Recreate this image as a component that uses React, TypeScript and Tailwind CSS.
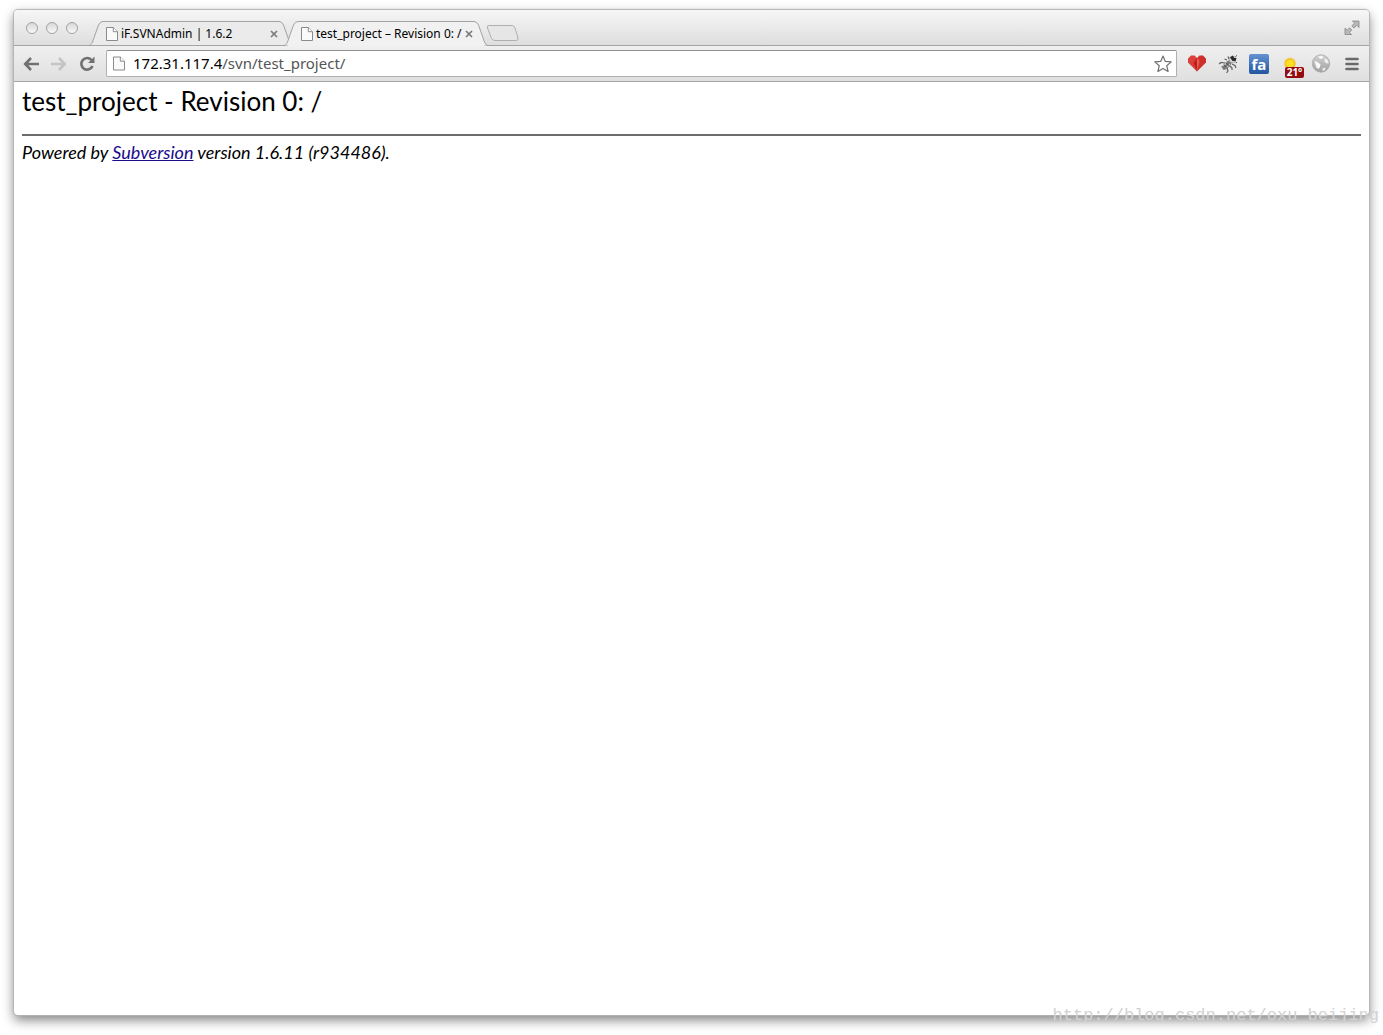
import type { ReactNode } from 'react';

const PageIcon = ({ className }: { className: string }) => (
  <svg viewBox="0 0 12 14" className={className} aria-hidden="true">
    <path d="M.5.5h6.8l4.2 4.2v8.8H.5z" fill="#fafafa" stroke="#8a8a8a" />
    <path d="M7.3.5v4.2h4.2" fill="#fff" stroke="#8a8a8a" />
  </svg>
);

const CloseButton = () => (
  <button type="button" aria-label="Close tab" className="shrink-0">
    <svg viewBox="0 0 8 8" className="size-2" aria-hidden="true">
      <path d="M1 1l6 6M7 1L1 7" stroke="#7a7a7a" strokeWidth="1.7" />
    </svg>
  </button>
);

type TabProps = { title: string; active?: boolean };

const Tab = ({ title, active = false }: TabProps) => (
  <div className={active ? 'relative z-10 -ml-[9px] h-6 w-[204px]' : 'relative h-6 w-[204px]'}>
    <svg viewBox="0 0 204 25" className="absolute top-0 left-0 h-[25px] w-[204px]" aria-hidden="true">
      <path
        d="M0 24.5C2 24 2.500 23 3.500 21L9.500 4Q11 .5 14 .5H190Q193 .5 194.500 4L200.500 21Q201.500 24 204 24.500"
        fill={active ? '#f1f1f1' : '#ebebeb'}
        stroke="#a3a3a3"
      />
      {active ? (
        <path d="M4 24.500H200" stroke="#f1f1f1" />
      ) : (
        <path d="M0 24.500H204" stroke="#a3a3a3" />
      )}
    </svg>
    <div className="relative flex h-6 items-center gap-[3px] pt-px pr-[15px] pl-[17px]">
      <PageIcon className="h-[14px] w-3 shrink-0" />
      <span className="grow text-xs whitespace-nowrap text-black">{title}</span>
      <CloseButton />
    </div>
  </div>
);

type ToolButtonProps = { label: string; children: ReactNode };

const ToolButton = ({ label, children }: ToolButtonProps) => (
  <button type="button" aria-label={label} className="flex size-5 shrink-0 items-center justify-center">
    {children}
  </button>
);

const TitleBar = () => (
  <div className="flex h-9 items-end rounded-t border-b border-[#a3a3a3] bg-linear-to-b from-[#f6f6f6] to-[#dedede]">
    <div className="flex gap-2 self-center pt-px pr-[11px] pl-3">
      {['Close', 'Minimize', 'Zoom'].map((label) => (
        <button
          key={label}
          type="button"
          aria-label={label}
          className="size-3 rounded-full border border-[#a2a2a2] bg-linear-to-b from-[#d8d8d8] to-[#f8f8f8]"
        />
      ))}
    </div>
    <Tab title="iF.SVNAdmin | 1.6.2" />
    <Tab title="test_project – Revision 0: /" active />
    <button type="button" aria-label="New tab" className="-ml-0.5 self-center">
      <svg viewBox="0 0 34 17" className="mt-3 h-[17px] w-[34px]" aria-hidden="true">
        <path
          d="M3 .5H26Q28 .5 29 3L32 13Q32.500 15.500 30 15.500H9Q6.500 15.500 5.500 13.500L1.500 3Q.5 .5 3 .5z"
          fill="#e6e6e6"
          stroke="#b0b0b0"
        />
      </svg>
    </button>
    <button type="button" aria-label="Full screen" className="mr-[9px] ml-auto self-center">
      <svg viewBox="0 0 16 16" className="size-4" fill="#b9b9b9" stroke="#858585" strokeWidth=".8" aria-hidden="true">
        <path d="M8.500 1H15V7.500L12.800 5.300L10 8.100L7.800 5.900L10.600 3.100z" />
        <path d="M1 8V14.500H7.500L5.400 12.400L7.800 10L5.600 7.800L3.200 10.200z" />
      </svg>
    </button>
  </div>
);

const HeartIcon = () => (
  <svg viewBox="0 0 20 18" className="h-[18px] w-5" aria-hidden="true">
    <path d="M10 16.500L1 7.500V3.500L4 .5H7.500L10 3z" fill="#dc3e39" />
    <path d="M10 16.500L19 7.500V3.500L16 .5H12.500L10 3z" fill="#ce302c" />
    <path d="M10 3v13.500L6.500 8z" fill="#b7211f" />
    <path d="M10 3L12.500 6L10 16.500z" fill="#ed5a50" />
  </svg>
);

const BugIcon = () => (
  <svg viewBox="0 0 20 20" className="size-5" aria-hidden="true">
    <g fill="none" stroke="#606060" strokeWidth="1.200">
      <path d="M9 6L6.500 5M7 9L3 8.500L1 10M6 12L3.500 13M11 5L10 2.500M14 10L17 11.500L18 14M12 12L14 14V16M9 14L10 17L8.500 19" />
    </g>
    <ellipse cx="9" cy="11" rx="6" ry="3" transform="rotate(-45 9 11)" fill="#777" />
    <path d="M5.500 12L9 8.500M8 14L12 10" stroke="#c4c4c4" strokeWidth="1.200" />
    <path d="M8 9L11.500 12M6 11L9.500 14" stroke="#3d3d3d" strokeWidth=".9" />
    <circle cx="14.500" cy="5.500" r="3.300" fill="#d8d8d8" stroke="#999" strokeWidth=".8" />
    <path d="M12 3.500l3-2 1 2.500 2.500 0-1 3-3 0z" fill="#292929" />
    <path d="M17.500 2.500l1.500-1M17.500 8l1.500 .8" stroke="#555" />
  </svg>
);

const GlobeIcon = () => (
  <svg viewBox="0 0 20 20" className="size-5" aria-hidden="true">
    <defs>
      <linearGradient id="globe" x1="0" y1="0" x2="0" y2="1">
        <stop offset="0" stopColor="#d2d2d2" />
        <stop offset="1" stopColor="#a0a0a0" />
      </linearGradient>
    </defs>
    <circle cx="10" cy="9.500" r="8.700" fill="url(#globe)" stroke="#ababab" strokeWidth=".8" />
    <path d="M7 2.500L11 1.800L12.500 3.500L10.500 5L8.500 4.500z" fill="#f8f8f8" />
    <path d="M3.500 7L6.500 8L9.500 10.500L9 13L7.500 15L5.500 13.500L4.500 10.500z" fill="#f8f8f8" />
    <path d="M13.500 4.500L16.500 5.500L17.800 9L15.500 9.500L13.500 7.500z" fill="#efefef" />
    <path d="M11.500 14.500L14.500 13.500L14 16L11.500 17z" fill="#efefef" />
  </svg>
);

const Extensions = () => (
  <div className="flex items-center gap-[11px] pr-[7px] pl-[10px]">
    <ToolButton label="Favourite">
      <HeartIcon />
    </ToolButton>
    <ToolButton label="Debugger">
      <BugIcon />
    </ToolButton>
    <button
      type="button"
      className="flex h-5 w-5 items-center justify-center rounded-xs bg-linear-to-b from-[#6393d2] to-[#23559f] font-['Open_Sans',sans-serif] text-[15px] leading-5 font-bold text-white"
    >
      fa
    </button>
    <button type="button" aria-label="Weather" className="relative size-5">
      <svg viewBox="0 0 20 20" className="size-5" aria-hidden="true">
        <circle cx="10" cy="9.500" r="6" fill="#f8c928" opacity=".65" />
        <circle cx="10" cy="9.500" r="4.500" fill="#ffdf22" stroke="#efb420" />
      </svg>
      <span className="absolute top-[13px] left-[5px] flex h-[11px] w-[19px] items-center justify-center rounded-xs bg-[#940b10] text-[10px] font-bold text-white">
        21°
      </span>
    </button>
    <ToolButton label="Globe">
      <GlobeIcon />
    </ToolButton>
    <ToolButton label="Menu">
      <svg viewBox="0 0 14 14" className="size-[14px]" aria-hidden="true">
        <path d="M1.500 2h11M1.500 7h11M1.500 12h11" stroke="#6a6a6a" strokeWidth="2.600" strokeLinecap="round" />
      </svg>
    </ToolButton>
  </div>
);

const Toolbar = () => (
  <div className="flex h-9 items-center border-b border-[#a5a5a5] bg-linear-to-b from-[#f0f0f0] to-[#dfdfdf]">
    <div className="flex gap-2 pr-[9px] pl-[7px]">
      <ToolButton label="Back">
        <svg viewBox="0 0 16 14" className="h-[14px] w-4" fill="none" stroke="#717171" strokeWidth="2.600" aria-hidden="true">
          <path d="M8 1L2.200 7L8 13M2.500 7H16" />
        </svg>
      </ToolButton>
      <ToolButton label="Forward">
        <svg viewBox="0 0 16 14" className="h-[14px] w-4" fill="none" stroke="#c4c4c4" strokeWidth="2.600" aria-hidden="true">
          <path d="M8 1L13.800 7L8 13M13.500 7H0" />
        </svg>
      </ToolButton>
      <ToolButton label="Reload">
        <svg viewBox="0 0 16 16" className="size-4" aria-hidden="true">
          <path d="M12.500 4A5.800 5.800 0 1 0 13.500 10" fill="none" stroke="#717171" strokeWidth="2.600" />
          <path d="M15.500 .5V7H9z" fill="#717171" />
        </svg>
      </ToolButton>
    </div>
    <div className="flex h-[27px] grow items-center rounded-xs border border-[#b0b0b0] border-t-[#8f8f8f] bg-white pr-1 pl-[6px]">
      <PageIcon className="h-[15px] w-3 shrink-0" />
      <a href="#top" className="grow pl-2 text-[15px] text-[#555]">
        <span className="text-black">172.31.117.4</span>/svn/test_project/
      </a>
      <button type="button" aria-label="Bookmark this page">
        <svg viewBox="0 0 18 18" className="size-[18px]" aria-hidden="true">
          <path
            d="M9 1L11.300 6.400L17.200 6.900L12.700 10.700L14.100 16.500L9 13.400L3.900 16.500L5.300 10.700L.8 6.900L6.700 6.400z"
            fill="#fff"
            stroke="#707070"
            strokeWidth="1.200"
            strokeLinejoin="round"
          />
        </svg>
      </button>
    </div>
    <Extensions />
  </div>
);

const App = () => (
  <div
    id="top"
    className="relative flex min-h-screen flex-col bg-white px-[14px] pt-[10px] pb-5 font-['Noto_Sans',sans-serif]"
  >
    <div className="flex grow flex-col rounded bg-white shadow-[0_0_1px_1px_#b4b4b4,0_5px_12px_#00000080]">
      <TitleBar />
      <Toolbar />
      <main className="px-2 pt-[3px] font-['Lato',sans-serif] text-black">
        <h1 className="text-[26px] leading-8">test_project - Revision 0: /</h1>
        <hr className="mt-[17px] border-t-2 border-[#6c6c6c]" />
        <p className="pt-1 text-lg leading-6 italic">
          Powered by{' '}
          <a href="http://subversion.apache.org/" className="text-[#1a0a8c] underline">
            Subversion
          </a>{' '}
          version 1.6.11 (r934486).
        </p>
      </main>
    </div>
    <span className="absolute right-1 bottom-[7px] font-['Liberation_Mono',monospace] text-[17px] leading-6 text-[#d2d2d2]">
      http://blog.csdn.net/oxu_beijing
    </span>
  </div>
);

export default App;
